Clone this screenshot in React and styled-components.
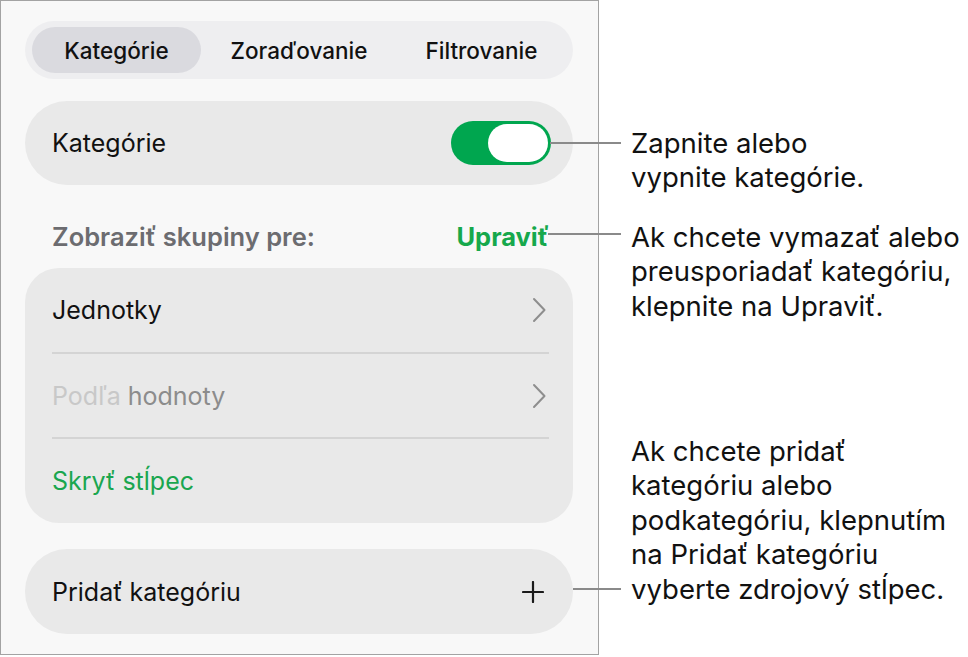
import React from 'react'
import styled, { createGlobalStyle } from 'styled-components'

const GlobalStyle = createGlobalStyle`
  html, body {
    margin: 0;
    padding: 0;
    background: #ffffff;
  }
  body {
    font-family: Inter, "Noto Sans", "Liberation Sans", sans-serif;
    color: #111111;
    -webkit-font-smoothing: antialiased;
  }
`;

const Page = styled.div`
  display: flex;
  align-items: flex-start;
  width: 968px;
  height: 657px;
`;

const Panel = styled.div`
  box-sizing: border-box;
  width: 599px;
  height: 655px;
  background: #f8f8f8;
  border: 1px solid #a3a3a3;
  padding: 20px 25px 0 24px;
  display: flex;
  flex-direction: column;
`;

const Segmented = styled.div`
  height: 58px;
  box-sizing: border-box;
  padding: 6px 7px;
  border-radius: 29px;
  background: #eeeef0;
  display: grid;
  grid-template-columns: 169px 196px 1fr;
`;

const Segment = styled.div`
  display: flex;
  align-items: center;
  justify-content: center;
  border-radius: 23px;
  font-size: 22.5px;
  font-weight: 500;
  color: #111;
  background: ${p => (p.$active ? '#dadadf' : 'transparent')};
`;

const Card = styled.div`
  background: #e9e9e9;
  border-radius: ${p => p.$radius || 42}px;
  margin-top: ${p => p.$top || 0}px;
`;

const Row = styled.div`
  height: ${p => p.$h || 84}px;
  box-sizing: border-box;
  padding: 0 ${p => p.$right || 24}px 0 27px;
  display: flex;
  align-items: center;
  justify-content: space-between;
  font-size: 25px;
  color: ${p => p.$color || '#111'};
`;

const Divider = styled.div`
  height: 2px;
  margin: 0 24px 0 27px;
  background: #d4d4d4;
`;

const Toggle = styled.div`
  width: 100px;
  height: 44px;
  box-sizing: border-box;
  border-radius: 22px;
  background: #00a64f;
  padding: 3px;
  display: flex;
  justify-content: flex-end;
`;

const Knob = styled.div`
  width: 60px;
  height: 38px;
  border-radius: 19px;
  background: #ffffff;
`;

const SectionHead = styled.div`
  display: flex;
  justify-content: space-between;
  align-items: center;
  margin: 36px 24px 17px 27px;
  height: 30px;
  font-size: 25.5px;
  font-weight: 600;
  color: #6c6c70;
`;

const EditLink = styled.span`
  color: #16a84c;
  font-weight: 700;
`;

const Faint = styled.span`
  color: #c8c8c8;
`;

const Muted = styled.span`
  color: #8c8c8c;
`;

const Notes = styled.div`
  display: flex;
  flex-direction: column;
  padding-left: 32px;
`;

const Callout = styled.div`
  position: relative;
  margin-top: ${p => p.$top}px;
  font-size: 27.5px;
  line-height: 34.4px;
  color: #111;
  white-space: nowrap;

  &::before {
    content: '';
    position: absolute;
    right: calc(100% + 10px);
    top: ${p => p.$lineY}px;
    width: ${p => p.$line}px;
    height: 2px;
    background: #8a8a8a;
  }
`;

const Chevron = () => (
  <svg width="14" height="26" viewBox="0 0 14 26">
    <path d="M2 2 L12.5 13 L2 24" fill="none" stroke="#8e8e8e" strokeWidth="2" strokeLinecap="round" strokeLinejoin="round" />
  </svg>
);

const Plus = () => (
  <svg width="22" height="22" viewBox="0 0 22 22">
    <path d="M11 1 V21 M1 11 H21" fill="none" stroke="#1a1a1a" strokeWidth="2.2" strokeLinecap="round" />
  </svg>
);

export default function App() {
  return (
    <>
      <GlobalStyle />
      <Page>
        <Panel>
          <Segmented>
            <Segment $active>Kategórie</Segment>
            <Segment>Zoraďovanie</Segment>
            <Segment>Filtrovanie</Segment>
          </Segmented>

          <Card $top={22}>
            <Row $right={22}>
              <span>Kategórie</span>
              <Toggle><Knob /></Toggle>
            </Row>
          </Card>

          <SectionHead>
            <span>Zobraziť skupiny pre:</span>
            <EditLink>Upraviť</EditLink>
          </SectionHead>

          <Card $radius={34}>
            <Row $right={27}>
              <span>Jednotky</span>
              <Chevron />
            </Row>
            <Divider />
            <Row $h={83} $right={27}>
              <span><Faint>Podľa</Faint> <Muted>hodnoty</Muted></span>
              <Chevron />
            </Row>
            <Divider />
            <Row $color="#1aa64f">
              <span>Skryť stĺpec</span>
            </Row>
          </Card>

          <Card $top={26}>
            <Row $h={85} $right={29}>
              <span>Pridať kategóriu</span>
              <Plus />
            </Row>
          </Card>
        </Panel>

        <Notes>
          <Callout $top={126} $lineY={16} $line={71}>
            Zapnite alebo<br />vypnite kategórie.
          </Callout>
          <Callout $top={25} $lineY={13} $line={73}>
            Ak chcete vymazať alebo<br />preusporiadať kategóriu,<br />klepnite na Upraviť.
          </Callout>
          <Callout $top={111} $lineY={154} $line={48}>
            Ak chcete pridať<br />kategóriu alebo<br />podkategóriu, klepnutím<br />na Pridať kategóriu<br />vyberte zdrojový stĺpec.
          </Callout>
        </Notes>
      </Page>
    </>
  )
}
